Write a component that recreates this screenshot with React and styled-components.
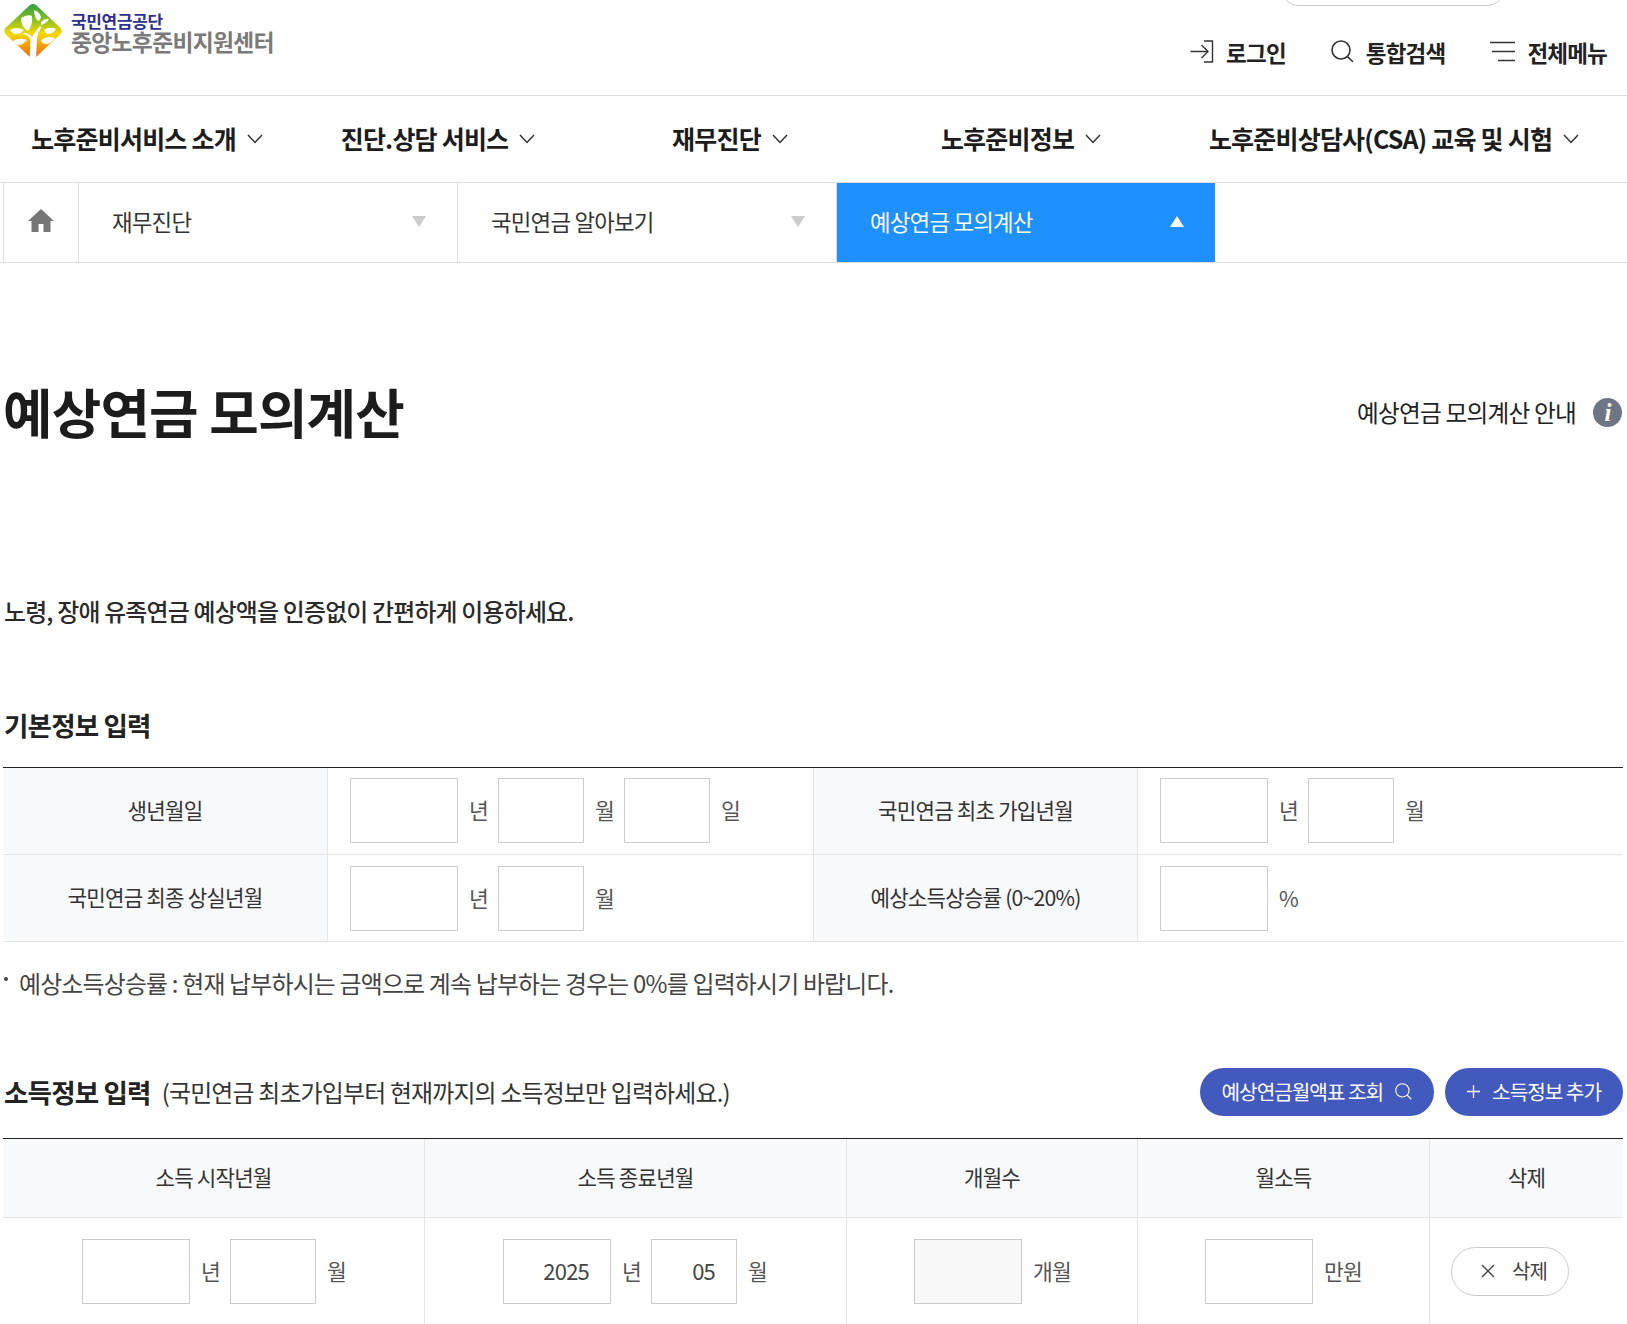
import React from "react";
import styled, { createGlobalStyle } from "styled-components";

const GlobalStyle = createGlobalStyle`
  html, body {
    margin: 0;
    padding: 0;
    background: #fff;
  }
  body {
    height: 1324px;
    overflow: hidden;
    font-family: "Noto Sans CJK KR", "Noto Sans", sans-serif;
    color: #222;
    letter-spacing: -0.05em;
  }
  * {
    box-sizing: border-box;
  }
`;

const LogoMark = () => (
  <svg width="60" height="57" viewBox="0 0 60 57">
    <defs>
      <linearGradient id="logoFill" x1="0" y1="0" x2="0" y2="1">
        <stop offset="0" stopColor="#2f9d46" />
        <stop offset="0.3" stopColor="#8cc21f" />
        <stop offset="0.55" stopColor="#f6d800" />
        <stop offset="1" stopColor="#ea5f14" />
      </linearGradient>
    </defs>
    <path
      d="M27 2 Q30 0 33 2 L57.5 25 Q60 28 57.5 31 L33 54 Q30 57 27 54 L2.5 31 Q0 28 2.5 25 Z"
      fill="url(#logoFill)"
    />
    <g fill="#fff">
      <path d="M26.5 56 L27.5 38 Q27 33 20 31 L21 29.5 Q27 31 29 34 Q31.5 29 37 23 L38.5 24 Q34.5 30 34 36 L33 56 Z" />
      <path d="M18 15 Q25 11 29 13 Q30 22 25 28 Q18 24 18 15 Z" />
      <path d="M31 7 Q37 9 38 14 Q37 18 35 18 Q31 14 31 7 Z" />
      <path d="M38 19 Q42 15 46 16 Q44 20 38 22 Z" />
      <path d="M7 27 Q13 23 21 27 Q18 31 13 31 Q9 31 7 27 Z" />
      <path d="M41 27 Q47 23 53 26 Q50 31 45 31 Q42 30 41 27 Z" />
      <path d="M10 38 Q16 34 24 37 Q20 42 15 42 Q12 41 10 38 Z" />
      <path d="M38 37 Q44 32 52 35 Q48 41 43 41 Q39 41 38 37 Z" />
    </g>
  </svg>
);

const LoginIcon = () => (
  <svg width="24" height="23" viewBox="0 0 24 23" fill="none" stroke="#333" strokeWidth="1.4">
    <path d="M0.5 11.5 H17.5 M11.5 5 L18 11.5 L11.5 18" />
    <path d="M14 1 H22.5 V22 H14" />
  </svg>
);

const SearchIcon = ({ size = 23, color = "#333", width = 1.6 }) => (
  <svg width={size} height={size} viewBox="0 0 23 23" fill="none" stroke={color} strokeWidth={width}>
    <circle cx="10" cy="10" r="9" />
    <path d="M16.5 16.5 L22 22" />
  </svg>
);

const MenuIcon = () => (
  <svg width="25" height="21" viewBox="0 0 25 21" fill="none" stroke="#333" strokeWidth="1.5">
    <path d="M0 1.5 H25 M2 10.5 H25 M8 19.5 H25" />
  </svg>
);

const Chevron = () => (
  <svg width="16" height="10" viewBox="0 0 16 10" fill="none" stroke="#333" strokeWidth="1.5">
    <path d="M1 1 L8 8.5 L15 1" />
  </svg>
);

const HomeIcon = () => (
  <svg width="26" height="23" viewBox="0 0 26 23" fill="#777">
    <path d="M13 0 L26 12 H22.5 V23 H15.5 V15 H10.5 V23 H3.5 V12 H0 Z" />
  </svg>
);

const CloseIcon = () => (
  <svg width="14" height="14" viewBox="0 0 14 14" fill="none" stroke="#444" strokeWidth="1.4">
    <path d="M1 1 L13 13 M13 1 L1 13" />
  </svg>
);

const PlusIcon = () => (
  <svg width="13" height="13" viewBox="0 0 13 13" fill="none" stroke="#fff" strokeWidth="1.3">
    <path d="M6.5 0 V13 M0 6.5 H13" />
  </svg>
);

const Field = ({ label, wide, value, disabled }) => (
  <>
    <Input $wide={wide} $disabled={disabled}>
      {value}
    </Input>
    {label && <Unit>{label}</Unit>}
  </>
);

export default function App() {
  return (
    <>
      <GlobalStyle />
      <Header>
        <SearchPill />
        <Logo>
          <LogoMark />
          <LogoText>
            <LogoTop>국민연금공단</LogoTop>
            <LogoBottom>중앙노후준비지원센터</LogoBottom>
          </LogoText>
        </Logo>
        <Util>
          <UtilItem>
            <LoginIcon />
            로그인
          </UtilItem>
          <UtilItem>
            <SearchIcon />
            통합검색
          </UtilItem>
          <UtilItem>
            <MenuIcon />
            전체메뉴
          </UtilItem>
        </Util>
      </Header>

      <Nav>
        <NavItem>
          노후준비서비스 소개 <Chevron />
        </NavItem>
        <NavItem>
          진단.상담 서비스 <Chevron />
        </NavItem>
        <NavItem>
          재무진단 <Chevron />
        </NavItem>
        <NavItem>
          노후준비정보 <Chevron />
        </NavItem>
        <NavItem>
          노후준비상담사(CSA) 교육 및 시험 <Chevron />
        </NavItem>
      </Nav>

      <Crumbs>
        <HomeCell>
          <HomeIcon />
        </HomeCell>
        <Crumb>
          재무진단
          <Arrow />
        </Crumb>
        <Crumb>
          국민연금 알아보기
          <Arrow />
        </Crumb>
        <Crumb $active>
          예상연금 모의계산
          <Arrow $active />
        </Crumb>
      </Crumbs>

      <Main>
        <TitleRow>
          <Title>예상연금 모의계산</Title>
          <Guide>
            예상연금 모의계산 안내
            <InfoDot>i</InfoDot>
          </Guide>
        </TitleRow>

        <Lead>노령, 장애 유족연금 예상액을 인증없이 간편하게 이용하세요.</Lead>

        <SectionTitle>기본정보 입력</SectionTitle>
        <BasicTable>
          <HeadCell>생년월일</HeadCell>
          <InputCell>
            <Field wide label="년" />
            <Field label="월" />
            <Field label="일" />
          </InputCell>
          <HeadCell>국민연금 최초 가입년월</HeadCell>
          <InputCell>
            <Field wide label="년" />
            <Field label="월" />
          </InputCell>
          <HeadCell>국민연금 최종 상실년월</HeadCell>
          <InputCell>
            <Field wide label="년" />
            <Field label="월" />
          </InputCell>
          <HeadCell>예상소득상승률 (0~20%)</HeadCell>
          <InputCell>
            <Field wide label="%" />
          </InputCell>
        </BasicTable>

        <Note>예상소득상승률 : 현재 납부하시는 금액으로 계속 납부하는 경우는 0%를 입력하시기 바랍니다.</Note>

        <IncomeBar>
          <IncomeTitle>
            <SectionTitle as="h3">소득정보 입력</SectionTitle>
            <IncomeHint>(국민연금 최초가입부터 현재까지의 소득정보만 입력하세요.)</IncomeHint>
          </IncomeTitle>
          <Buttons>
            <PrimaryButton>
              예상연금월액표 조회
              <SearchIcon size={17} color="#fff" width={1.5} />
            </PrimaryButton>
            <PrimaryButton>
              <PlusIcon />
              소득정보 추가
            </PrimaryButton>
          </Buttons>
        </IncomeBar>

        <IncomeTable>
          <ColHead>소득 시작년월</ColHead>
          <ColHead>소득 종료년월</ColHead>
          <ColHead>개월수</ColHead>
          <ColHead>월소득</ColHead>
          <ColHead>삭제</ColHead>
          <DataCell $pad={79}>
            <Field wide label="년" />
            <Field label="월" />
          </DataCell>
          <DataCell $pad={78}>
            <Field wide label="년" value="2025" />
            <Field label="월" value="05" />
          </DataCell>
          <DataCell $pad={67}>
            <Field wide disabled label="개월" />
          </DataCell>
          <DataCell $pad={67}>
            <Field wide label="만원" />
          </DataCell>
          <DataCell $pad={21}>
            <DeleteButton>
              <CloseIcon />
              삭제
            </DeleteButton>
          </DataCell>
        </IncomeTable>
      </Main>
    </>
  );
}

const Header = styled.header`
  position: relative;
  height: 96px;
  border-bottom: 1px solid #e2e2e2;
  display: flex;
  justify-content: space-between;
  padding: 3px 20px 0 3px;
`;

const SearchPill = styled.div`
  position: absolute;
  top: -30px;
  left: 1281px;
  width: 224px;
  height: 36px;
  border: 1px solid #ccc;
  border-radius: 18px;
`;

const Logo = styled.div`
  display: flex;
  gap: 8px;
  height: 57px;
`;

const LogoText = styled.div`
  display: flex;
  flex-direction: column;
  padding-top: 9px;
`;

const LogoTop = styled.span`
  font-size: 17px;
  line-height: 18px;
  font-weight: 700;
  color: #2f2f8f;
  letter-spacing: -0.02em;
`;

const LogoBottom = styled.span`
  font-size: 22.8px;
  line-height: 24px;
  font-weight: 700;
  color: #7a7a7a;
  letter-spacing: -0.03em;
`;

const Util = styled.div`
  display: flex;
  align-items: center;
  gap: 45px;
  height: 92px;
  margin-top: -3px;
  padding-top: 11px;
`;

const UtilItem = styled.a`
  display: flex;
  align-items: center;
  gap: 12px;
  font-size: 22.5px;
  font-weight: 700;
  color: #222;
`;

const Nav = styled.nav`
  display: grid;
  grid-template-columns: 294px 288px 296px 286px 460px;
  height: 87px;
  padding-bottom: 2px;
  border-bottom: 1px solid #e0e0e0;
`;

const NavItem = styled.a`
  display: flex;
  align-items: center;
  justify-content: center;
  gap: 11px;
  font-size: 25px;
  font-weight: 700;
  color: #1c1c1c;
  white-space: nowrap;

  svg {
    margin-top: 2px;
  }
`;

const Crumbs = styled.div`
  display: flex;
  height: 80px;
  padding-left: 3px;
  border-bottom: 1px solid #e0e0e0;
`;

const HomeCell = styled.div`
  width: 76px;
  display: flex;
  align-items: center;
  justify-content: center;
  padding-bottom: 5px;
  border-left: 1px solid #ddd;
  border-right: 1px solid #ddd;
`;

const Crumb = styled.div`
  width: ${(p) => (p.$active ? "378px" : "379px")};
  display: flex;
  align-items: center;
  justify-content: space-between;
  padding: 0 31px 3px 33px;
  font-size: 22.4px;
  color: ${(p) => (p.$active ? "#fff" : "#333")};
  background: ${(p) => (p.$active ? "#1e90ff" : "transparent")};
  border-right: ${(p) => (p.$active ? "0" : "1px solid #ddd")};
`;

const Arrow = styled.i`
  width: 0;
  height: 0;
  border-left: 7px solid transparent;
  border-right: 7px solid transparent;
  ${(p) =>
    p.$active
      ? "border-bottom: 11px solid #fff;"
      : "border-top: 11px solid #ccc;"}
`;

const Main = styled.main`
  width: 1620px;
  margin-left: 3px;
`;

const TitleRow = styled.div`
  display: flex;
  align-items: center;
  justify-content: space-between;
  height: 296px;
`;

const Title = styled.h1`
  margin: 0;
  font-size: 53.8px;
  line-height: 1.2;
  font-weight: 700;
  color: #1c1c1c;
`;

const Guide = styled.a`
  display: flex;
  align-items: center;
  gap: 17px;
  margin: 2px 1px 0 0;
  font-size: 23.7px;
  color: #222;
`;

const InfoDot = styled.span`
  width: 29px;
  height: 29px;
  border-radius: 50%;
  background: #6f7683;
  color: #fff;
  font: italic 700 25px/29px "Liberation Serif", serif;
  text-align: center;
`;

const Lead = styled.p`
  margin: 34px 0 0;
  padding-left: 1px;
  font-size: 23.9px;
  line-height: 36px;
  font-weight: 500;
  color: #2a2a2a;
`;

const SectionTitle = styled.h2`
  margin: 76px 0 0;
  padding-left: 1px;
  font-size: 26.5px;
  line-height: 40px;
  font-weight: 700;
  color: #222;
`;

const BasicTable = styled.div`
  display: grid;
  grid-template-columns: 325px 486px 324px 485px;
  grid-auto-rows: 87px;
  margin-top: 22px;
  border-top: 1px solid #222;
`;

const HeadCell = styled.div`
  display: flex;
  align-items: center;
  justify-content: center;
  padding-bottom: 3px;
  background: #f8f9fb;
  font-size: 21.2px;
  color: #333;
  border-bottom: 1px solid #e5e5e5;
  border-right: 1px solid #e5e5e5;
`;

const InputCell = styled.div`
  display: flex;
  align-items: center;
  padding: 0 22px;
  border-bottom: 1px solid #e5e5e5;
  border-right: 1px solid #e5e5e5;

  &:nth-child(-n + 4) {
    padding-bottom: 1px;
  }

  &:nth-child(4n) {
    border-right: 0;
  }
`;

const Input = styled.div`
  flex: none;
  width: ${(p) => (p.$wide ? "108px" : "86px")};
  height: 65px;
  padding-right: 21px;
  border: 1px solid #ccc;
  background: ${(p) => (p.$disabled ? "#f8f8f8" : "#fff")};
  text-align: right;
  font-size: 22px;
  line-height: 60px;
  color: #444;
`;

const Unit = styled.span`
  margin: 0 10px 2px 11px;
  min-width: 19px;
  font-size: 21.5px;
  color: #555;
`;

const Note = styled.p`
  position: relative;
  margin: 24px 0 0;
  padding-left: 16px;
  font-size: 23.9px;
  line-height: 34px;
  color: #444;

  &::before {
    content: "";
    position: absolute;
    left: 1px;
    top: 11px;
    width: 4px;
    height: 4px;
    border-radius: 50%;
    background: #444;
  }
`;

const IncomeBar = styled.div`
  display: flex;
  align-items: center;
  justify-content: space-between;
  margin-top: 68px;
`;

const IncomeTitle = styled.div`
  display: flex;
  align-items: center;
  gap: 11px;

  h3 {
    margin: 0;
  }
`;

const IncomeHint = styled.span`
  padding-bottom: 2px;
  font-size: 23.9px;
  color: #333;
`;

const Buttons = styled.div`
  display: flex;
  gap: 11px;
`;

const PrimaryButton = styled.button`
  display: flex;
  align-items: center;
  gap: 12px;
  height: 48px;
  padding: 0 22px 2px;
  border: 0;
  border-radius: 24px;
  background: #4259bd;
  color: #fff;
  font: inherit;
  font-size: 20.2px;
  letter-spacing: -0.05em;
`;

const IncomeTable = styled.div`
  display: grid;
  grid-template-columns: 422px 422px 291px 292px 193px;
  grid-template-rows: 79px 107px;
  margin-top: 22px;
  border-top: 1px solid #222;
`;

const ColHead = styled.div`
  display: flex;
  align-items: center;
  justify-content: center;
  padding-bottom: 3px;
  background: #f8f9fb;
  font-size: 21.2px;
  color: #333;
  border-bottom: 1px solid #e5e5e5;
  border-right: 1px solid #e5e5e5;

  &:nth-child(5) {
    border-right: 0;
  }
`;

const DataCell = styled.div`
  display: flex;
  align-items: center;
  padding-left: ${(p) => p.$pad}px;
  border-right: 1px solid #e5e5e5;

  &:last-child {
    border-right: 0;
  }
`;

const DeleteButton = styled.button`
  display: flex;
  align-items: center;
  justify-content: center;
  gap: 17px;
  width: 118px;
  height: 49px;
  padding: 0 0 2px 8px;
  border: 1px solid #ccc;
  border-radius: 25px;
  background: #fff;
  color: #444;
  font: inherit;
  font-size: 20px;
  letter-spacing: -0.05em;
`;
